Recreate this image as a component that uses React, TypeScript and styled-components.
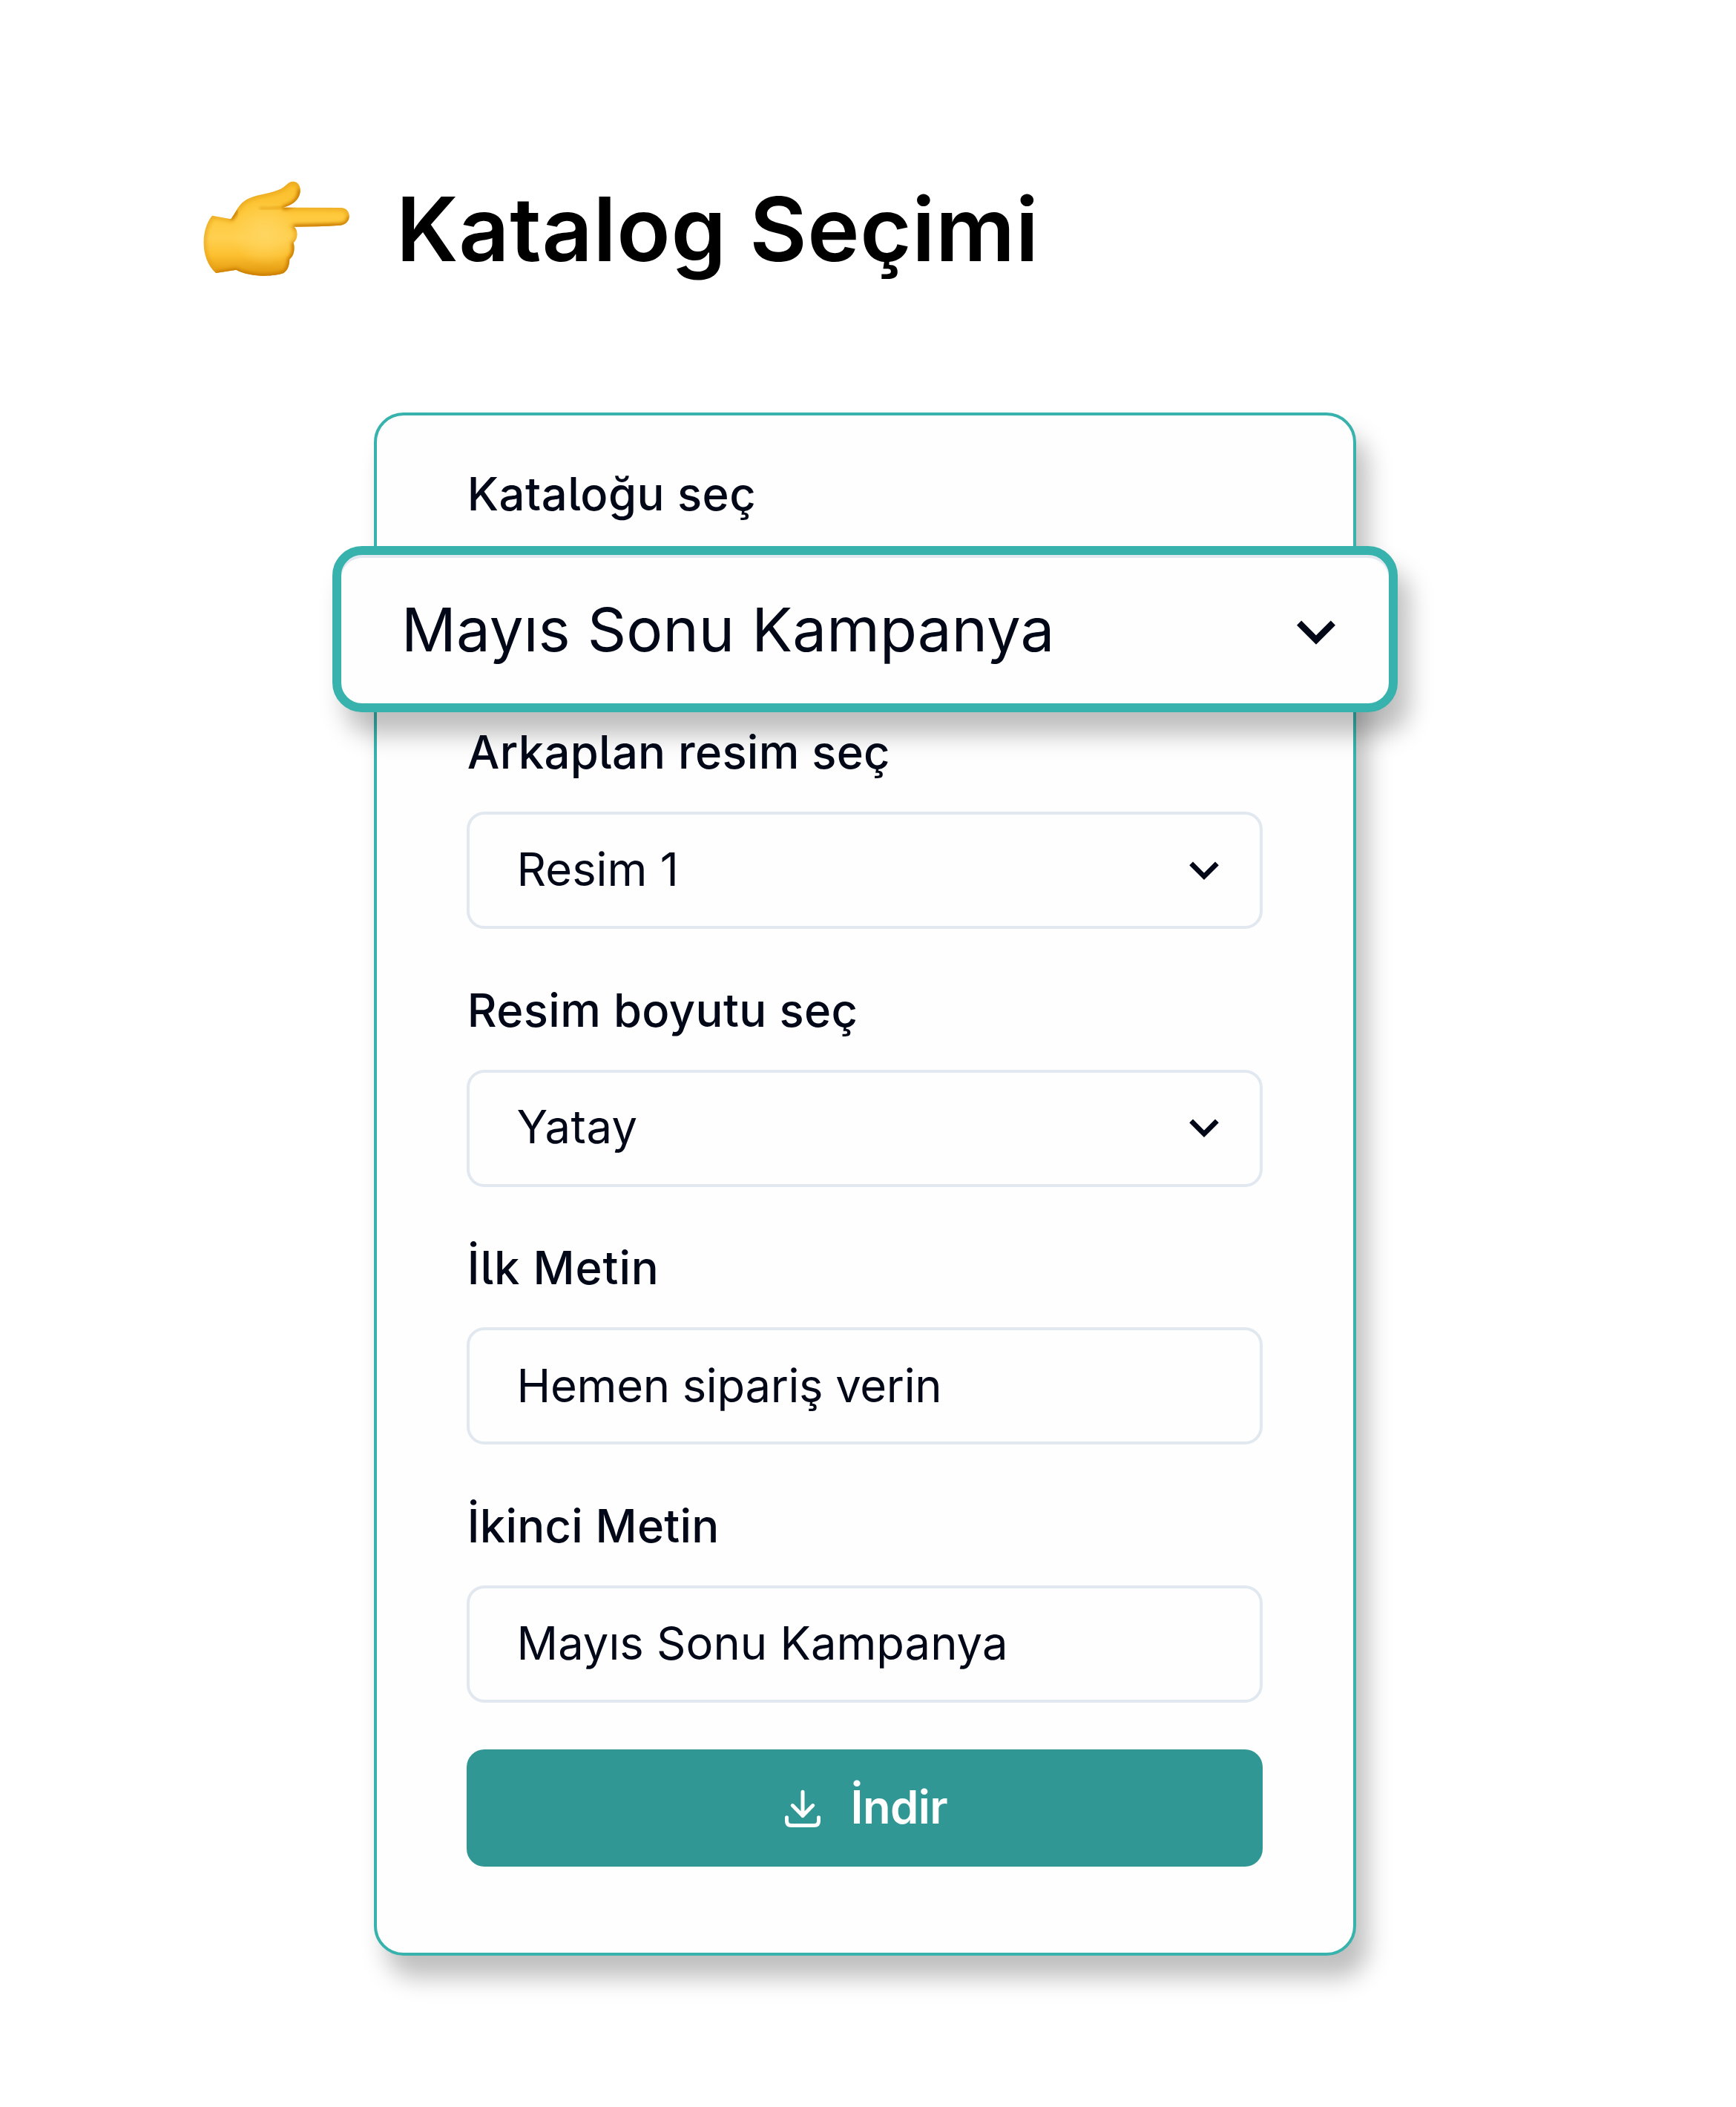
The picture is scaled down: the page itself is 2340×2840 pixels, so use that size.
import React from "react";
import styled, { createGlobalStyle, css } from "styled-components";

const teal = "#38b2ac";
const ink = "#020817";
const line = "#e2e8f0";
const dropShadow = "16px 30px 32px rgba(0, 0, 0, 0.25)";

const GlobalStyle = createGlobalStyle`
  *, *::before, *::after { box-sizing: border-box; }
  body {
    margin: 0;
    background: #fff;
    font-family: Inter, "Liberation Sans", sans-serif;
  }
`;

const Page = styled.main`
  width: 2340px;
  height: 2840px;
  padding-top: 220px;
  overflow: hidden;
  background: #fff;
`;

const Header = styled.header`
  display: flex;
  align-items: flex-start;
  gap: 34px;
  height: 180px;
  padding-left: 250px;
`;

const HandSvg = styled.svg`
  display: block;
  width: 250px;
  height: 180px;
`;

const Title = styled.h1`
  margin: 0;
  font-size: 119px;
  font-weight: 600;
  line-height: 179px;
  letter-spacing: 0.65px;
  color: #000;
  white-space: nowrap;
`;

const Card = styled.section`
  width: 1324px;
  height: 2080px;
  margin: 156px 0 0 504px;
  padding: 74.4px 122px 0 120.6px;
  border: 4px solid ${teal};
  border-radius: 40px;
  background: #fefefe;
  box-shadow: ${dropShadow};
`;

const Fields = styled.div`
  display: flex;
  flex-direction: column;
  gap: 77.6px;
`;

const Field = styled.div`
  display: flex;
  flex-direction: column;
  gap: 48px;
`;

const Label = styled.label<{ $track: number }>`
  padding-left: 1.2px;
  font-size: 61.5px;
  font-weight: 520;
  line-height: 64px;
  letter-spacing: ${(p) => p.$track}px;
  font-feature-settings: "cv05";
  color: ${ink};
  white-space: nowrap;
`;

const Control = styled.div<{ $active?: boolean; $lift: number }>`
  display: flex;
  align-items: center;
  justify-content: space-between;
  color: ${ink};
  ${(p) =>
    p.$active
      ? css`
          height: 224px;
          margin: -10.4px -182px -55.6px -180.6px;
          padding: 0 72px 0 81px;
          border: 12px solid ${teal};
          border-radius: 40px;
          background: #fefefe;
          box-shadow: inset 0 4px 0 ${line}, ${dropShadow};
          font-size: 81.7px;
        `
      : css`
          height: 158px;
          padding: 0 55px ${p.$lift * 2}px 64px;
          border: 4px solid ${line};
          border-radius: 24px;
          font-size: 61.5px;
        `}
`;

const Value = styled.span<{ $track: number }>`
  margin-top: 2px;
  line-height: 1.2;
  letter-spacing: ${(p) => p.$track}px;
  white-space: nowrap;
`;

const ChevronSvg = styled.svg<{ $drop: number }>`
  display: block;
  flex: none;
  margin-top: ${(p) => p.$drop}px;
`;

const DownloadButton = styled.button`
  display: flex;
  align-items: center;
  justify-content: center;
  gap: 41px;
  width: 100%;
  height: 158px;
  margin-top: 63.2px;
  padding: 0 0 3px 4px;
  border: 0;
  border-radius: 24px;
  background: #319795;
  color: #fff;
  font: 600 61.5px/1.2 Inter, "Liberation Sans", sans-serif;
  letter-spacing: -0.6px;
`;

const DownloadSvg = styled.svg`
  display: block;
  margin-top: 5px;
`;

const handPath =
  "M108 212L183 226C207 198 212 163 255 143C300 123 345 123 385 104C407 93 415 73 437 74C463 77 468 105 462 125C455 152 427 171 395 179L630 180C674 183 674 247 625 251C565 256 500 256 439 257C457 271 455 307 437 321C443 343 440 375 421 388C420 412 415 434 395 445C350 461 255 459 205 431L123 444C60 390 60 270 108 212Z";

function PointingHand() {
  return (
    <HandSvg viewBox="0 0 750 540" aria-hidden="true">
      <defs>
        <linearGradient id="skin" gradientUnits="userSpaceOnUse" x1="0" y1="75" x2="0" y2="456">
          <stop offset="0" stopColor="#f9bd2c" />
          <stop offset="0.32" stopColor="#fec83a" />
          <stop offset="0.6" stopColor="#ffd050" />
          <stop offset="0.78" stopColor="#fcc030" />
          <stop offset="1" stopColor="#df940c" />
        </linearGradient>
        <radialGradient id="glow" gradientUnits="userSpaceOnUse" cx="320" cy="285" r="130">
          <stop offset="0" stopColor="#ffd560" />
          <stop offset="1" stopColor="#ffd560" stopOpacity="0" />
        </radialGradient>
        <clipPath id="handClip">
          <path d={handPath} />
        </clipPath>
        <filter id="soft" x="-20%" y="-20%" width="140%" height="140%">
          <feGaussianBlur stdDeviation="9" />
        </filter>
        <filter id="softer" x="-20%" y="-80%" width="140%" height="260%">
          <feGaussianBlur stdDeviation="6" />
        </filter>
      </defs>
      <path d={handPath} fill="url(#skin)" />
      <g clipPath="url(#handClip)">
        <path d={handPath} fill="url(#glow)" />
        <path d={handPath} fill="none" stroke="#e39c12" strokeWidth="13" filter="url(#soft)" />
        <path
          d="M123 446L205 433C255 459 350 461 395 445C415 434 420 412 421 388C440 375 443 343 437 321M439 257L625 252C650 250 664 235 664 215M462 105C466 140 440 172 395 181"
          fill="none"
          stroke="#c97a04"
          strokeWidth="16"
          filter="url(#softer)"
        />
        <path d="M300 183C340 184 370 183 400 178" fill="none" stroke="#d98d0c" strokeWidth="6" filter="url(#softer)" />
        <path d="M183 226C193 215 200 203 207 190" fill="none" stroke="#c97a04" strokeWidth="16" filter="url(#softer)" />
      </g>
    </HandSvg>
  );
}

function Chevron({ large }: { large?: boolean }) {
  return large ? (
    <ChevronSvg $drop={9} width="52" height="34" viewBox="0 0 52 34">
      <path d="M3.1 3.6L26 26.5L48.9 3.6" fill="none" stroke={ink} strokeWidth="8.7" />
    </ChevronSvg>
  ) : (
    <ChevronSvg $drop={6} width="40" height="26" viewBox="0 0 40 26">
      <path d="M2.6 2.9L20 20.3L37.4 2.9" fill="none" stroke={ink} strokeWidth="6.8" />
    </ChevronSvg>
  );
}

function DownloadIcon() {
  return (
    <DownloadSvg width="48" height="52" viewBox="0 0 48 52">
      <path
        d="M24 3.2V35.5M10.3 21.6L24 35.5L37.7 21.6M2.5 37.7V42.5Q2.5 48.5 8.5 48.5H39.5Q45.5 48.5 45.5 42.5V37.7"
        fill="none"
        stroke="#fff"
        strokeWidth="5"
        strokeLinecap="round"
        strokeLinejoin="round"
      />
    </DownloadSvg>
  );
}

type FieldItem = {
  label: string;
  labelTrack: number;
  value: string;
  valueTrack: number;
  select?: boolean;
  active?: boolean;
};

const fields: FieldItem[] = [
  { label: "Kataloğu seç", labelTrack: 0.5, value: "Mayıs Sonu Kampanya", valueTrack: 0.1, select: true, active: true },
  { label: "Arkaplan resim seç", labelTrack: 0.3, value: "Resim 1", valueTrack: 0, select: true },
  { label: "Resim boyutu seç", labelTrack: 0.4, value: "Yatay", valueTrack: 0.5, select: true },
  { label: "İlk Metin", labelTrack: 0.9, value: "Hemen sipariş verin", valueTrack: -0.3 },
  { label: "İkinci Metin", labelTrack: 0.25, value: "Mayıs Sonu Kampanya", valueTrack: 0.02 },
];

export default function App() {
  return (
    <>
      <GlobalStyle />
      <Page>
        <Header>
          <PointingHand />
          <Title>Katalog Seçimi</Title>
        </Header>
        <Card>
          <Fields>
            {fields.map((f) => (
              <Field key={f.label}>
                <Label $track={f.labelTrack}>{f.label}</Label>
                <Control $active={f.active} $lift={f.select ? 2.4 : 1.5}>
                  <Value $track={f.valueTrack}>{f.value}</Value>
                  {f.select && <Chevron large={f.active} />}
                </Control>
              </Field>
            ))}
          </Fields>
          <DownloadButton type="button">
            <DownloadIcon />
            <span>İndir</span>
          </DownloadButton>
        </Card>
      </Page>
    </>
  );
}
